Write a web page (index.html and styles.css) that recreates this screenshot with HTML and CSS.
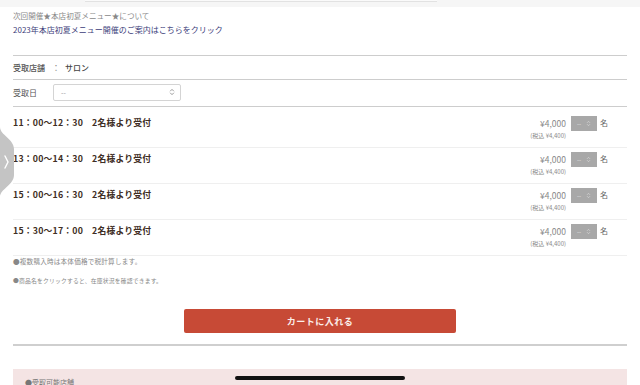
FILE: index.html
```html
<!DOCTYPE html>
<html lang="ja">
<head>
<meta charset="utf-8">
<link rel="stylesheet" href="styles.css">
</head>
<body>
<div class="topbar"><div class="topbox"></div></div>
<main class="page">
  <div class="intro">
    <p class="intro-line">次回開催★本店初夏メニュー★について</p>
    <p class="intro-link">2023年本店初夏メニュー開催のご案内はこちらをクリック</p>
  </div>
  <div class="field store">
    <span class="label">受取店舗</span><span class="colon">：</span><span class="value">サロン</span>
  </div>
  <div class="field date">
    <span class="label">受取日</span>
    <div class="select">
      <span class="dash">--</span>
      <svg class="updown" viewBox="0 0 8 10" width="6" height="8"><path d="M1.5 4 L4 1.5 L6.5 4 M1.5 6 L4 8.5 L6.5 6" fill="none" stroke="#777" stroke-width="1"/></svg>
    </div>
  </div>
  <div class="slots">
    <div class="slot first">
      <div class="slot-title">11：00〜12：30　2名様より受付</div>
      <div class="slot-buy">
        <div class="prices"><div class="price">¥4,000</div><div class="tax">(税込 ¥4,400)</div></div>
        <div class="qty"><span>--</span><svg viewBox="0 0 8 10" width="5" height="7"><path d="M1.5 4 L4 1.5 L6.5 4 M1.5 6 L4 8.5 L6.5 6" fill="none" stroke="#ddd" stroke-width="1"/></svg></div>
        <span class="unit">名</span>
      </div>
    </div>
    <div class="slot">
      <div class="slot-title">13：00〜14：30　2名様より受付</div>
      <div class="slot-buy">
        <div class="prices"><div class="price">¥4,000</div><div class="tax">(税込 ¥4,400)</div></div>
        <div class="qty"><span>--</span><svg viewBox="0 0 8 10" width="5" height="7"><path d="M1.5 4 L4 1.5 L6.5 4 M1.5 6 L4 8.5 L6.5 6" fill="none" stroke="#ddd" stroke-width="1"/></svg></div>
        <span class="unit">名</span>
      </div>
    </div>
    <div class="slot">
      <div class="slot-title">15：00〜16：30　2名様より受付</div>
      <div class="slot-buy">
        <div class="prices"><div class="price">¥4,000</div><div class="tax">(税込 ¥4,400)</div></div>
        <div class="qty"><span>--</span><svg viewBox="0 0 8 10" width="5" height="7"><path d="M1.5 4 L4 1.5 L6.5 4 M1.5 6 L4 8.5 L6.5 6" fill="none" stroke="#ddd" stroke-width="1"/></svg></div>
        <span class="unit">名</span>
      </div>
    </div>
    <div class="slot">
      <div class="slot-title">15：30〜17：00　2名様より受付</div>
      <div class="slot-buy">
        <div class="prices"><div class="price">¥4,000</div><div class="tax">(税込 ¥4,400)</div></div>
        <div class="qty"><span>--</span><svg viewBox="0 0 8 10" width="5" height="7"><path d="M1.5 4 L4 1.5 L6.5 4 M1.5 6 L4 8.5 L6.5 6" fill="none" stroke="#ddd" stroke-width="1"/></svg></div>
        <span class="unit">名</span>
      </div>
    </div>
  </div>
  <p class="note note1">●複数購入時は本体価格で税計算します。</p>
  <p class="note note2">●商品名をクリックすると、在庫状況を確認できます。</p>
  <div class="cart-wrap"><button class="cart">カートに入れる</button></div>
  <div class="divider"></div>
  <div class="stores"><p>●受取可能店舗</p></div>
</main>
<div class="side-tab">
  <svg viewBox="0 0 16 70" width="16" height="70"><path d="M0 0 C0 8 14 12 14 22 L14 48 C14 58 0 62 0 70 Z" fill="#c4c4c4"/><path d="M5 29 L8 35 L5 41" fill="none" stroke="#fff" stroke-width="1.4" stroke-linecap="round"/></svg>
</div>
<div class="home-indicator"></div>
</body>
</html>
```
FILE: styles.css
```css
* { box-sizing: border-box; }
html, body { margin: 0; padding: 0; }
body {
  width: 640px;
  height: 385px;
  overflow: hidden;
  background: #fff;
  font-family: "Noto Sans CJK JP", "Noto Sans", sans-serif;
  color: #444;
  position: relative;
}
p { margin: 0; }

.topbar {
  height: 7px;
  background: #f6f6f6;
  padding-left: 85px;
}
.topbox {
  width: 352px;
  height: 2px;
  border-bottom: 1px solid #e2e2e2;
  background: #fafafa;
}

.page { padding: 0 13px; }

.intro { padding-top: 2px; }
.intro-line {
  font-size: 7.6px;
  line-height: 14px;
  color: #888;
}
.intro-link {
  font-size: 8px;
  line-height: 14px;
  color: #3c3d7a;
}

.field {
  display: flex;
  align-items: center;
  border-top: 1px solid #cdcdcd;
  font-size: 8px;
  color: #555;
}
.store {
  margin-top: 18px;
  height: 24px;
  font-weight: 500;
}
.store .colon { margin-left: 7px; color: #888; }
.store .value { margin-left: 5px; color: #444; }
.date {
  height: 28px;
  padding-top: 4px;
  padding-bottom: 6px;
  border-bottom: 1px solid #cdcdcd;
}
.date .label { width: 40px; }
.select {
  width: 128px;
  height: 17px;
  border: 1px solid #d4d4d4;
  border-radius: 2px;
  display: flex;
  align-items: center;
  justify-content: space-between;
  padding: 0 5px 0 7px;
  color: #999;
  font-size: 7px;
}

.slot {
  display: flex;
  justify-content: space-between;
  align-items: flex-start;
  padding: 5px 19px 6px 0;
  border-bottom: 1px solid #efefef;
}
.slot.first { padding-top: 10px; }
.slot-title {
  font-size: 8.8px;
  line-height: 12px;
  font-weight: 700;
  color: #3e2e24;
  letter-spacing: 0.2px;
}
.slot-buy {
  display: flex;
  align-items: flex-start;
}
.prices { text-align: right; }
.price {
  font-size: 8.5px;
  line-height: 12px;
  color: #888;
}
.tax {
  margin-top: 2px;
  font-size: 6px;
  line-height: 10px;
  color: #888;
}
.qty {
  margin-left: 5px;
  margin-top: -1px;
  width: 26px;
  height: 15px;
  background: #a8a8a8;
  display: flex;
  align-items: center;
  justify-content: space-between;
  padding: 0 6px 0 6px;
  font-size: 6px;
  color: #e4e4e4;
}
.unit {
  margin-left: 3px;
  font-size: 8px;
  line-height: 12px;
  color: #666;
}

.note {
  font-size: 6.6px;
  color: #888;
  line-height: 10px;
  letter-spacing: 0.2px;
}
.note1 { margin-top: 0; }
.note2 { margin-top: 10px; font-size: 5.8px; }

.cart-wrap {
  display: flex;
  justify-content: center;
  margin-top: 23px;
}
.cart {
  width: 272px;
  height: 24px;
  border: none;
  border-radius: 2px;
  background: #c74a36;
  color: #fbeeea;
  font-family: "Noto Sans CJK JP", sans-serif;
  font-weight: 700;
  font-size: 9px;
  letter-spacing: 0.5px;
  padding: 0;
}

.divider {
  margin-top: 11px;
  height: 2px;
  background: #cfcfcf;
}

.stores {
  margin-top: 23px;
  background: #f4e4e4;
  height: 40px;
  padding: 8px 12px;
}
.stores p {
  font-size: 7px;
  color: #777;
  line-height: 10px;
}

.side-tab {
  position: absolute;
  left: 0;
  top: 127px;
  width: 16px;
  height: 70px;
}
.side-tab svg { display: block; }

.home-indicator {
  position: absolute;
  left: 235px;
  top: 376px;
  width: 170px;
  height: 4px;
  border-radius: 2px;
  background: #111;
}
```
